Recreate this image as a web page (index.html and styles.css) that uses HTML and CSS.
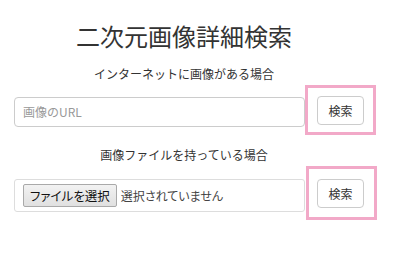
FILE: index.html
```html
<!DOCTYPE html>
<html lang="ja">
<head>
<meta charset="utf-8">
<link rel="stylesheet" href="styles.css">
</head>
<body>
<div class="page">
  <h1 class="title">二次元画像詳細検索</h1>
  <p class="label">インターネットに画像がある場合</p>
  <div class="row row-url">
    <div class="url-input">画像のURL</div>
    <div class="mark mark-1">
      <button class="btn">検索</button>
    </div>
  </div>
  <p class="label label-file">画像ファイルを持っている場合</p>
  <div class="row row-file">
    <div class="file-input">
      <span class="file-btn">ファイルを選択</span>
      <span class="file-status">選択されていません</span>
    </div>
    <div class="mark mark-2">
      <button class="btn">検索</button>
    </div>
  </div>
</div>
</body>
</html>
```

FILE: styles.css
```css
html, body {
  margin: 0;
  padding: 0;
  background: #ffffff;
}
body {
  font-family: "Noto Sans CJK JP", "Noto Sans", sans-serif;
  color: #333333;
}
.page {
  width: 368px;
  padding-top: 18px;
}
.title {
  margin: 0;
  font-size: 24px;
  font-weight: normal;
  line-height: 36px;
  text-align: center;
  color: #333333;
}
.label {
  margin: 0;
  margin-top: 11px;
  font-size: 12px;
  line-height: 18px;
  text-align: center;
  color: #333333;
}
.label-file {
  margin-top: 11px;
}
.row {
  display: flex;
  align-items: flex-start;
  margin-left: 14px;
}
.row-url {
  margin-top: 14px;
}
.row-file {
  margin-top: 15px;
}
.url-input {
  box-sizing: border-box;
  flex: none;
  width: 291px;
  height: 30px;
  border: 1px solid #cccccc;
  border-radius: 4px;
  padding: 0 8px;
  font-size: 12px;
  line-height: 28px;
  color: #999999;
}
.file-input {
  box-sizing: border-box;
  flex: none;
  width: 291px;
  height: 33px;
  border: 1px solid #dddddd;
  border-radius: 3px;
  padding: 4px 8px;
  display: flex;
  align-items: center;
  gap: 4px;
  font-feature-settings: "palt";
}
.file-btn {
  box-sizing: border-box;
  height: 23px;
  padding: 0 6px;
  border: 1px solid #a9a9a9;
  border-radius: 2px;
  background: linear-gradient(#f2f2f2, #e0e0e0);
  font-size: 12.5px;
  line-height: 21px;
  color: #111111;
}
.file-status {
  font-size: 12px;
  color: #444444;
}
.mark {
  border: 3px solid #f2a9c8;
  flex: none;
}
.mark-1 {
  margin-top: -12px;
  padding: 8px 9px 7px 9px;
}
.mark-2 {
  margin-top: -13px;
  margin-left: 1px;
  padding: 10px 10px 9px 8px;
}
.btn {
  box-sizing: border-box;
  width: 47px;
  height: 29px;
  margin: 0;
  padding: 0;
  border: 1px solid #cccccc;
  border-radius: 4px;
  background: #ffffff;
  font-family: "Noto Sans CJK JP", sans-serif;
  font-size: 12px;
  color: #333333;
  display: block;
}
```
